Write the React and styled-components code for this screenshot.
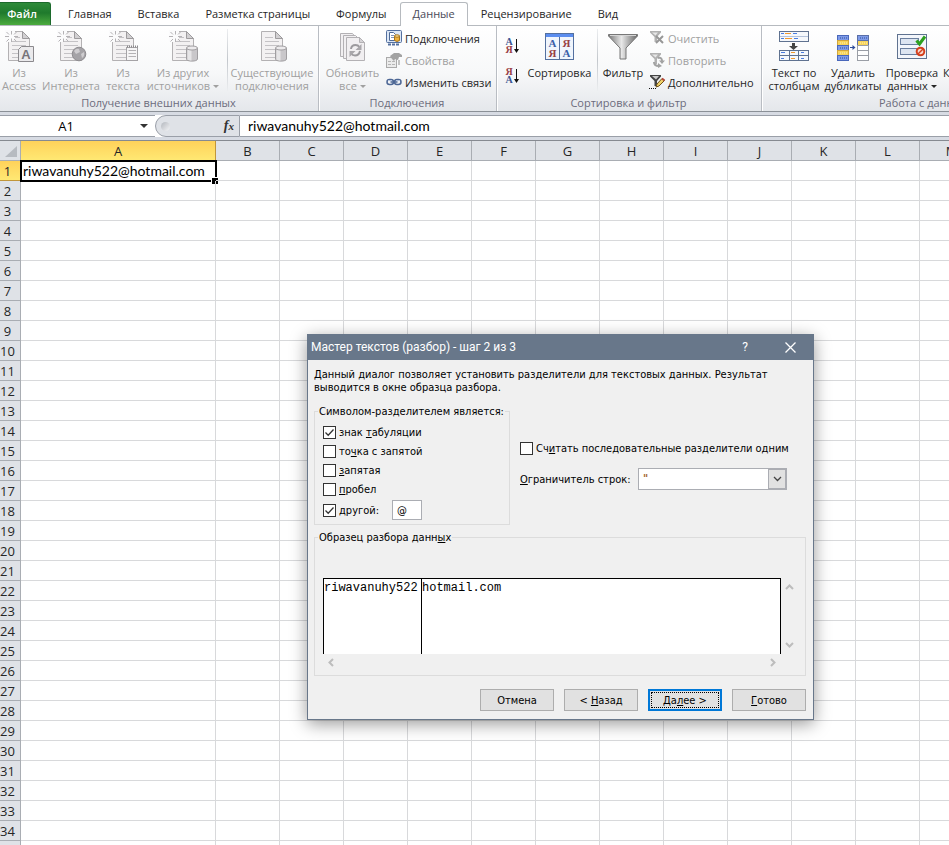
import React, { useState } from "react";
import styled, { createGlobalStyle, css } from "styled-components";

const GlobalStyle = createGlobalStyle`
  * {
    box-sizing: border-box;
  }
  html,
  body {
    margin: 0;
    background: #fff;
  }
  body {
    font-family: "Open Sans", "Noto Sans", sans-serif;
    font-size: 11px;
    color: #262626;
  }
  button,
  input,
  select {
    font: inherit;
    color: inherit;
  }
`;

const Page = styled.div`
  display: flex;
  flex-direction: column;
  height: 100vh;
  overflow: hidden;
`;

/* ---------- ribbon ---------- */

const Tabs = styled.nav`
  display: flex;
  align-items: flex-end;
  height: 26px;
  padding-top: 2px;
  border-bottom: 1px solid #b6babf;
`;

const Tab = styled.button`
  align-self: stretch;
  padding: 0 12px 2px;
  margin-bottom: -1px;
  border: 1px solid transparent;
  border-bottom: none;
  border-radius: 3px 3px 0 0;
  background: none;
  white-space: nowrap;
  ${({ $active }) =>
    $active &&
    css`
      border-color: #b6babf;
      background: #fff;
      color: #4a4a58;
    `}
`;

const FileTab = styled(Tab)`
  width: 51px;
  margin: 0 4px 0 0;
  padding: 0 6px 2px 0;
  border: 1px solid #1c6a2c;
  border-left: none;
  border-bottom: none;
  border-radius: 0 3px 0 0;
  background: linear-gradient(#2e8b3a, #1f7a2c 45%, #4cab3e);
  color: #fff;
  font-weight: 600;
`;

const RibbonBar = styled.div`
  display: flex;
  flex: none;
  overflow: hidden;
  background: linear-gradient(#fff, #f7f8f9 55%, #e4e7eb);
  border-bottom: 1px solid #8b9097;
`;

const Group = styled.section`
  display: flex;
  flex-direction: column;
  flex: 0 0 ${({ $width }) => $width}px;
  border-right: 1px solid #b9bdc3;
  box-shadow: 1px 0 #fff;
  padding-right: 1px;
`;

const GroupBody = styled.div`
  display: flex;
  height: 70px;
`;

const GroupTitle = styled.div`
  height: 15px;
  line-height: 14px;
  text-align: center;
  color: #6c6c7c;
`;

const BigButton = styled.button`
  display: flex;
  flex-direction: column;
  align-items: center;
  gap: 4px;
  flex: 0 0 ${({ $width }) => $width}px;
  min-width: 0;
  padding: 4px 0 0;
  border: none;
  background: none;
  line-height: 13px;
  white-space: nowrap;
  color: ${({ disabled }) => (disabled ? "#a0a0a0" : "#262626")};

  svg {
    flex: none;
  }
`;

const Label = styled.span`
  display: block;
  width: max-content;
`;

const Divider = styled.div`
  width: 1px;
  height: 62px;
  margin: 3px 3px 0;
  background: linear-gradient(#eceef0, #c3c7cc, #eceef0);
`;

const Stack = styled.div`
  display: flex;
  flex-direction: column;
  padding: 1px 0 0 ${({ $indent }) => $indent || 0}px;
`;

const SmallButton = styled.button`
  display: flex;
  align-items: center;
  gap: 3px;
  height: 22px;
  padding: 0;
  border: none;
  background: none;
  white-space: nowrap;
  color: ${({ disabled }) => (disabled ? "#a0a0a0" : "#262626")};
`;

const SortColumn = styled.div`
  display: flex;
  flex-direction: column;
  align-items: flex-end;
  gap: 14px;
  width: 28px;
  padding: 12px 4px 0 0;
`;

const IconButton = styled.button`
  display: flex;
  padding: 0;
  border: none;
  background: none;
`;

const Caret = styled.span`
  display: inline-block;
  margin-left: 3px;
  vertical-align: 2px;
  border: 3px solid transparent;
  border-top-color: currentColor;
  border-bottom: none;
`;

/* ---------- formula bar ---------- */

const FormulaBar = styled.div`
  display: flex;
  flex: none;
  height: 29px;
  padding: 3px 0;
  background: #d7dbe3;
  border-bottom: 1px solid #868a91;
`;

const NameBox = styled.div`
  display: flex;
  align-items: center;
  width: 155px;
  border: solid #9a9fa8;
  border-width: 1px 0;
  background: #fff;
`;

const NameInput = styled.input`
  width: 132px;
  padding: 0;
  border: none;
  outline: none;
  background: none;
  color: #000;
  font-size: 13px;
  text-align: center;
`;

const DropButton = styled.button`
  display: flex;
  justify-content: center;
  flex: 1;
  padding: 0;
  border: none;
  background: none;
`;

const DropArrow = styled.span`
  border: 4px solid transparent;
  border-top-color: #333;
  border-bottom: none;
`;

const FunctionArea = styled.div`
  width: 85px;
  background: #fff;
`;

const FunctionPill = styled.div`
  display: flex;
  align-items: center;
  justify-content: space-between;
  height: 100%;
  padding: 0 5px;
  border: 1px solid #9a9fa8;
  border-radius: 11px 0 0 11px;
  background: #dfe2e7;
`;

const Knob = styled.span`
  width: 9px;
  height: 9px;
  border-radius: 50%;
  background: linear-gradient(135deg, #b3b7bd, #f4f5f7);
`;

const FxButton = styled.button`
  padding: 0;
  border: none;
  background: none;
  font: italic bold 14px/16px "Liberation Serif", serif;
  color: #333;

  small {
    font-size: 11px;
  }
`;

const FormulaInput = styled.input`
  flex: 1;
  min-width: 0;
  padding: 0 8px 2px;
  border: solid #9a9fa8;
  border-width: 1px 0;
  outline: none;
  background: #fff;
  color: #000;
  font-family: Lato, sans-serif;
  font-size: 14px;
`;

/* ---------- sheet ---------- */

const SheetArea = styled.main`
  flex: 1;
  min-height: 0;
  overflow: hidden;
`;

const Sheet = styled.table`
  width: max-content;
  table-layout: fixed;
  border-collapse: separate;
  border-spacing: 0;
  font-size: 13px;
`;

const Col = styled.col`
  width: ${({ $width }) => $width}px;
`;

const headStyle = css`
  height: 20px;
  border: solid;
  border-width: 0 1px 1px 0;
  font-weight: 400;
  line-height: 17px;
  background: ${({ $active }) =>
    $active ? "linear-gradient(#ffd25a, #ffe873)" : "#dfe2e7"};
  border-color: ${({ $active }) => ($active ? "#c1963a" : "#a9adb3")};
`;

const ColHead = styled.th`
  padding: 2px 0 0;
  ${headStyle}
`;

const RowHead = styled.th`
  padding: 2px 5px 0 0;
  ${headStyle}
`;

const Corner = styled(ColHead)`
  svg {
    display: block;
    margin-left: 5px;
  }
`;

const Cell = styled.td`
  position: relative;
  padding: 0 0 0 2px;
  border: solid #d8d9db;
  border-width: 0 1px 1px 0;
  line-height: 19px;
  white-space: nowrap;
  color: #000;
  font-family: Lato, sans-serif;
  font-size: 14px;
  ${({ $selected }) =>
    $selected &&
    css`
      outline: 2px solid #000;
      outline-offset: -1px;

      &::after {
        content: "";
        position: absolute;
        right: -3px;
        bottom: -4px;
        width: 6px;
        height: 6px;
        border: solid #fff;
        border-width: 1px 0 0 1px;
        background: #000;
      }
    `}
`;

/* ---------- dialog ---------- */

const Dialog = styled.div`
  position: absolute;
  left: 307px;
  top: 334px;
  width: 507px;
  border: 1px solid #68778a;
  background: #f0f0f0;
  box-shadow: 0 4px 16px rgba(0, 0, 0, 0.4);
  color: #000;
  font-family: "DejaVu Sans Condensed", "DejaVu Sans", sans-serif;
  font-size: 11px;
  line-height: 13px;
`;

const TitleBar = styled.header`
  display: flex;
  align-items: center;
  height: 25px;
  padding: 0 8px 0 3px;
  background: #68778a;
  color: #fff;
  font-family: Roboto, "Open Sans", sans-serif;
  font-size: 12px;
`;

const DialogTitle = styled.h1`
  flex: 1;
  margin: 0;
  font-size: 12px;
  font-weight: 400;
`;

const TitleButton = styled.button`
  display: flex;
  align-items: center;
  justify-content: center;
  width: 30px;
  margin-left: 15px;
  padding: 0;
  border: none;
  background: none;
`;

const DialogBody = styled.div`
  padding: 8px 7px 8px 6px;
`;

const Description = styled.p`
  margin: 0 0 11px;
`;

const Columns = styled.div`
  display: flex;
  gap: 10px;
`;

const Frame = styled.fieldset`
  min-width: 0;
  margin: 0;
  padding: 0;
  border: 1px solid #dcdcdc;
`;

const Delimiters = styled(Frame)`
  width: 196px;
  height: 120px;
  padding: 5px 8px 0;
`;

const Legend = styled.legend`
  margin-left: -5px;
  padding: 0 1px;
  white-space: nowrap;
`;

const CheckRow = styled.label`
  display: flex;
  align-items: center;
  gap: 3px;
  height: 19px;
  white-space: nowrap;
`;

const OtherRow = styled.div`
  display: flex;
  align-items: center;
  gap: 13px;
  height: 22px;
`;

const Check = styled.input`
  appearance: none;
  flex: none;
  width: 13px;
  height: 13px;
  margin: 0;
  border: 1px solid #333;
  background: #fff;

  &:checked {
    background: #fff
      url("data:image/svg+xml,%3Csvg xmlns='http://www.w3.org/2000/svg' width='11' height='11'%3E%3Cpath d='M1.5 5.5L4.2 8.2L9.5 2.5' fill='none' stroke='%23333' stroke-width='1.3'/%3E%3C/svg%3E");
  }
`;

const OtherInput = styled.input`
  width: 30px;
  height: 20px;
  padding: 0 4px;
  border: 1px solid #abadb3;
  outline: none;
  background: #fff;
`;

const Options = styled.div`
  display: flex;
  flex-direction: column;
  gap: 10px;
  flex: 1;
  padding-top: 34px;
`;

const QualifierRow = styled.div`
  display: flex;
  align-items: center;
  justify-content: space-between;
  padding-right: 19px;
  white-space: nowrap;
`;

const SelectBox = styled.div`
  display: grid;
  grid-template-columns: 1fr 18px;
  width: 149px;
  height: 22px;
  border: 1px solid #abadb3;
  background: #fff;
`;

const Select = styled.select`
  grid-area: 1 / 1 / 2 / 3;
  appearance: none;
  padding: 0 4px 2px;
  border: none;
  outline: none;
  background: none;
  color: #a3622a;
  font-weight: 700;
`;

const SelectArrow = styled.span`
  grid-area: 1 / 2;
  display: flex;
  align-items: center;
  justify-content: center;
  border: 1px solid #abadb3;
  background: #e1e1e1;
  pointer-events: none;
`;

const PreviewFrame = styled(Frame)`
  margin-top: 6px;
  height: 145px;
  padding: 34px 8px 0;
`;

const PreviewGrid = styled.div`
  display: grid;
  grid-template-columns: 1fr 16px;
`;

const Preview = styled.table`
  height: 76px;
  border-spacing: 0;
  border-top: 1px solid #000;
  border-right: 1px solid #000;
  background: #fff;
  font-family: "Liberation Mono", monospace;
  font-size: 12px;

  td {
    padding: 3px 0 0;
    border-left: 1px solid #000;
    vertical-align: top;
  }

  td:first-child {
    width: 98px;
  }
`;

const ScrollTrack = styled.div`
  display: flex;
  flex-direction: ${({ $vertical }) => ($vertical ? "column" : "row")};
  justify-content: space-between;
  align-items: center;
  padding: ${({ $vertical }) => ($vertical ? "4px 0" : "4px 3px")};
`;

const Footer = styled.footer`
  display: flex;
  justify-content: flex-end;
  gap: 10px;
  margin-top: 13px;
`;

const DialogButton = styled.button`
  width: 74px;
  height: 22px;
  padding: 0;
  border: ${({ $primary }) =>
    $primary ? "2px solid #0078d7" : "1px solid #adadad"};
  background: #e1e1e1;
  ${({ $primary }) =>
    $primary &&
    css`
      outline: 1px dotted #000;
      outline-offset: -4px;
    `}
`;

/* ---------- icons ---------- */

const Icon = ({ size = 32, children }) => (
  <svg width={size} height={size} viewBox={`0 0 ${size} ${size}`} overflow="visible" aria-hidden="true">
    {children}
  </svg>
);

const Doc = ({ sparkle }) => (
  <>
    <path d="M5.5 1.5H19.5L26.5 8.5V30.5H5.5Z" fill="#f3f1f2" stroke="#b3b1b3" />
    <path d="M19.5 1.5V8.5H26.5Z" fill="#d2d0d2" stroke="#9d9b9d" />
    <path
      d="M9 7.5H17M9 11.5H23M9 15.5H23M9 19.5H23M9 23.5H23M9 27.5H20"
      stroke="#c4c2c5"
    />
    {sparkle && (
      <>
        <path d="M2 0H12V8L8 12H2Z" fill="#fbfbfc" />
        <path
          d="M8.5 1V4.5M8.5 8.5V12M2 6.5H6M11 6.5H15M3.500 2L6 4.5M13.500 2L11 4.5M3.500 11.5L6 9M13.500 11.5L11 9"
          stroke="#b4b2b5"
          fill="none"
        />
      </>
    )}
  </>
);

const Cylinder = () => (
  <>
    <path d="M19.5 18V29C19.5 31.8 30.5 31.8 30.5 29V18Z" fill="#c9c7ca" stroke="#a09ea1" />
    <path d="M21.5 20V30M23.5 20V30.5" stroke="#e6e5e7" strokeWidth="2" />
    <ellipse cx="25" cy="18" rx="5.5" ry="2" fill="#eceaec" stroke="#a09ea1" />
  </>
);

const AccessIcon = () => (
  <Icon>
    <Doc sparkle />
    <path d="M18.5 16.5H30.5V31.5H15.5V19.5Z" fill="#ebeaec" stroke="#8b898d" />
    <text x="23" y="29" fontFamily="Liberation Sans" fontSize="13" fontWeight="700" textAnchor="middle" fill="#77757a">
      A
    </text>
  </Icon>
);

const WebIcon = () => (
  <Icon>
    <Doc sparkle />
    <circle cx="24" cy="24" r="6.8" fill="#a5a3a7" stroke="#8e8c90" />
    <path d="M19 21Q21 18 24 19L25 22L21 24ZM26 24L29 22Q30 26 27 28Z" fill="#cfcdd0" />
  </Icon>
);

const TextIcon = () => (
  <Icon>
    <Doc sparkle />
    <rect x="19.5" y="17.5" width="11" height="13" fill="#f6f5f6" stroke="#a5a3a6" />
    <path d="M20 16.5H31" stroke="#8b898c" strokeWidth="2" strokeDasharray="1 1" />
    <path d="M21.5 20.5H29M21.5 23.5H29M21.5 26.5H29" stroke="#b4b2b5" />
  </Icon>
);

const SourcesIcon = () => (
  <Icon>
    <Doc sparkle />
    <Cylinder />
  </Icon>
);

const ExistingIcon = () => (
  <Icon>
    <Doc />
    <Cylinder />
  </Icon>
);

const RefreshIcon = () => (
  <Icon>
    <g fill="#f1eff1" stroke="#b3b1b4">
      <path d="M3.5 3.5H15.5L19.5 8.5V26.5H3.5Z" />
      <path d="M6.5 5.5H18.5L23.5 10.5V28.5H6.5Z" />
      <path d="M9.5 7.5H22.5L27.5 12.5V30.5H9.5Z" />
      <path d="M22.5 7.5V12.5H27.5Z" fill="#d6d4d7" />
    </g>
    <path d="M14 19Q14.5 15 18.5 15Q21 15 22.5 17M23 21Q22 25.5 18 25.5Q15.5 25.5 14 23.5" fill="none" stroke="#9c9a9e" strokeWidth="2" />
    <path d="M24.5 14V20H18.5ZM12.5 27V21H18.5Z" fill="#a9a7ab" />
  </Icon>
);

const ConnectionsIcon = () => (
  <Icon size={16}>
    <rect x="0.5" y="0.5" width="15" height="12" rx="1" fill="#dbe6f5" stroke="#54709f" />
    <path d="M3.5 2.5H7.5L9.5 4.5V10.5H3.5Z" fill="#fff" stroke="#4f6a96" />
    <path d="M5 5.5H8M5 7.5H8" stroke="#7d93b8" />
    <path d="M8.5 6V10.5Q11 12.5 13.5 10.5V6Z" fill="#eeb23c" stroke="#a6741c" />
    <ellipse cx="11" cy="6" rx="2.5" ry="1.2" fill="#ffe39a" stroke="#a6741c" />
    <path d="M2 14.5H14" stroke="#54709f" strokeWidth="2" strokeDasharray="3 1" />
  </Icon>
);

const PropertiesIcon = () => (
  <Icon size={16}>
    <rect x="0.5" y="5.5" width="10" height="10" fill="#ebebeb" stroke="#aaa" />
    <path d="M2 9.5H5M2 12.5H5M6 9.5H9M6 12.5H9" stroke="#b5b5b5" />
    <path d="M4 4L8 1H13L16 3V5H13L12 8L9 7L8 9L6 7Z" fill="#a3a3a3" />
    <path d="M12 8H14V13H12Z" fill="#c4c4c4" />
  </Icon>
);

const LinksIcon = () => (
  <Icon size={16}>
    <g fill="none" stroke="#4d6795" strokeWidth="1.5">
      <rect x="1" y="5.5" width="6.5" height="5" rx="2.5" />
      <rect x="8.5" y="5.5" width="6.5" height="5" rx="2.5" />
      <path d="M4.5 8H11.5" />
    </g>
    <path d="M2 6.5H6M10 6.5H14" stroke="#b5c5e0" />
  </Icon>
);

const SortIcon = ({ top, bottom }) => {
  const color = (letter) => (letter === "А" ? "#3b5492" : "#994045");
  return (
    <Icon size={16}>
      <g fontFamily="Liberation Serif" fontSize="10" fontWeight="700" textAnchor="middle">
        <text x="4" y="7" fill={color(top)}>{top}</text>
        <text x="4" y="15" fill={color(bottom)}>{bottom}</text>
      </g>
      <path d="M11.5 1V14" stroke="#111" />
      <path d="M9 11H14L11.5 15Z" fill="#111" />
    </Icon>
  );
};

const SortDialogIcon = () => (
  <Icon>
    <rect x="1.5" y="3.5" width="28" height="26" fill="#f0f5fc" stroke="#54709f" />
    <path d="M2 4H29V7H2Z" fill="#5b8def" />
    <path d="M15.5 7V29" stroke="#54709f" />
    <g fontFamily="Liberation Serif" fontSize="11" fontWeight="700" textAnchor="middle">
      <text x="8.5" y="17" fill="#3b5fa8">А</text>
      <text x="8.5" y="27" fill="#994045">Я</text>
      <text x="22.5" y="17" fill="#994045">Я</text>
      <text x="22.5" y="27" fill="#3b5fa8">А</text>
    </g>
  </Icon>
);

const FilterIcon = () => (
  <Icon>
    <defs>
      <linearGradient id="funnel">
        <stop offset="0" stopColor="#777" />
        <stop offset="0.45" stopColor="#e8e8e8" />
        <stop offset="1" stopColor="#666" />
      </linearGradient>
    </defs>
    <path d="M1.5 4.5H30.5V6L19 18V29H13V18L1.5 6Z" fill="url(#funnel)" stroke="#777" />
    <path d="M3 5.5H29" stroke="#d5d5d5" />
  </Icon>
);

const MiniFunnel = ({ fill }) => <path d="M1 1H12V2.5L8 7V12H5.5V7L1 2.5Z" fill={fill} />;

const ClearIcon = () => (
  <Icon size={16}>
    <MiniFunnel fill="#b1b1b1" />
    <path d="M3 2.5H9L6.5 5.5Z" fill="#e6e6e6" />
    <path d="M7 6L14 13M14 6L7 13" stroke="#979797" strokeWidth="2" />
  </Icon>
);

const ReapplyIcon = () => (
  <Icon size={16}>
    <MiniFunnel fill="#b1b1b1" />
    <path d="M3 2.5H9L6.5 5.5Z" fill="#e6e6e6" />
    <path d="M9 6Q13 5 13 9M5 10Q5 14 10 14" fill="none" stroke="#a2a2a2" strokeWidth="2" />
    <path d="M10 8.5H16L13 12ZM9 11L13 14L9 16Z" fill="#a2a2a2" />
  </Icon>
);

const AdvancedIcon = () => (
  <Icon size={16}>
    <MiniFunnel fill="#444" />
    <path d="M3 2H10L7 5.5Z" fill="#c9c9c9" />
    <path d="M7 13L8 10L13 4.5L15.5 6.5L10 12Z" fill="#f0d268" stroke="#6d5018" />
    <path d="M13 4.5L15.5 6.5" stroke="#b5463b" strokeWidth="2" />
    <path d="M0 14.5H7" stroke="#111" strokeDasharray="1 1" />
  </Icon>
);

const ColumnsIcon = () => (
  <Icon>
    <g fill="#f5f8fc" stroke="#5f7290">
      <rect x="1.5" y="1.5" width="29" height="10" />
      <rect x="1.5" y="20.5" width="29" height="10" />
      <path d="M1.5 25.5H30.5M11.5 20.5V30.5M20.5 20.5V30.5" />
    </g>
    <path d="M2 6.5H30" stroke="#b4c3dc" />
    <path d="M3 3.5H6M15 3.5H19M3 8.5H6M16 8.5H20M3 22.5H7M23 22.5H26M3 28.5H6M23 28.5H26" stroke="#4a7de0" />
    <path d="M7 3.5H13M7 8.5H14M13 22.5H17M13 28.5H17" stroke="#f29a2e" />
    <path d="M14 13H17V16H20L15.5 20L11 16H14Z" fill="#444" />
  </Icon>
);

const DuplicatesIcon = () => (
  <Icon>
    {["#7e9be8", "#f8d45a", "#7e9be8", "#f8d45a", "#7e9be8"].map((fill, i) => (
      <g key={i}>
        <rect x="0.5" y={5.5 + i * 5} width="11" height="5" fill={fill} stroke={i % 2 ? "#d3a63a" : "#4a68bb"} />
        <path d={`M3 ${8 + i * 5}H10`} stroke={i % 2 ? "#fdf0bb" : "#2f4c9a"} strokeDasharray="1 1" />
      </g>
    ))}
    {["#7e9be8", "#f8d45a", "#fff", "#fff", "#fff"].map((fill, i) => (
      <rect key={i} x="20.5" y={5.5 + i * 5} width="11" height="5" fill={fill} stroke={i > 1 ? "#9a9ea6" : "#5a6fa8"} />
    ))}
    <path d="M23 8H30" stroke="#2f4c9a" strokeDasharray="1 1" />
    <path d="M23 13H30" stroke="#fdf0bb" strokeDasharray="1 1" />
    <path d="M13 17.5H17" stroke="#2f4c9a" />
    <path d="M15.5 15L18.5 17.5L15.5 20Z" fill="#2f4c9a" />
  </Icon>
);

const ValidationIcon = () => (
  <Icon>
    <rect x="1.5" y="4.5" width="29" height="24" fill="#f3f6fb" stroke="#5f7290" />
    <rect x="4.5" y="8.5" width="18" height="6" fill="#dde5f1" stroke="#6b7f9f" />
    <rect x="4.5" y="18.5" width="18" height="6" fill="#dde5f1" stroke="#6b7f9f" />
    <path d="M20.5 10.5L23.5 14L29 6.5" fill="none" stroke="#2ea01f" strokeWidth="3" />
    <circle cx="24.5" cy="21.5" r="3.8" fill="#f7d9d0" stroke="#d43f1c" strokeWidth="2" />
    <path d="M22 24L27 19" stroke="#d43f1c" strokeWidth="1.5" />
  </Icon>
);

const ConsolidateIcon = () => (
  <Icon>
    <rect x="1.5" y="4.5" width="12" height="10" fill="#f3f6fb" stroke="#5f7290" />
    <rect x="17.5" y="16.5" width="13" height="12" fill="#f3f6fb" stroke="#5f7290" />
  </Icon>
);

const Chevron = ({ direction, color = "#bdbdbd", width = 2 }) => {
  const paths = {
    up: "M1 7L4.5 3.5L8 7",
    down: "M1 2L4.5 5.5L8 2",
    left: "M7 1L3.5 4.5L7 8",
    right: "M2 1L5.5 4.5L2 8",
  };
  return (
    <Icon size={9}>
      <path d={paths[direction]} fill="none" stroke={color} strokeWidth={width} />
    </Icon>
  );
};

/* ---------- parts ---------- */

const Ribbon = () => (
  <RibbonBar>
    <Group $width={319}>
      <GroupBody>
        <BigButton $width={38} disabled>
          <AccessIcon />
          <Label>Из<br />Access</Label>
        </BigButton>
        <BigButton $width={66} disabled>
          <WebIcon />
          <Label>Из<br />Интернета</Label>
        </BigButton>
        <BigButton $width={38} disabled>
          <TextIcon />
          <Label>Из<br />текста</Label>
        </BigButton>
        <BigButton $width={82} disabled>
          <SourcesIcon />
          <Label>Из других<br />источников<Caret /></Label>
        </BigButton>
        <Divider />
        <BigButton $width={82} disabled>
          <ExistingIcon />
          <Label>Существующие<br />подключения</Label>
        </BigButton>
      </GroupBody>
      <GroupTitle>Получение внешних данных</GroupTitle>
    </Group>
    <Group $width={178}>
      <GroupBody>
        <BigButton $width={67} disabled>
          <RefreshIcon />
          <Label>Обновить<br />все<Caret /></Label>
        </BigButton>
        <Stack>
          <SmallButton><ConnectionsIcon />Подключения</SmallButton>
          <SmallButton disabled><PropertiesIcon />Свойства</SmallButton>
          <SmallButton><LinksIcon />Изменить связи</SmallButton>
        </Stack>
      </GroupBody>
      <GroupTitle>Подключения</GroupTitle>
    </Group>
    <Group $width={265}>
      <GroupBody>
        <SortColumn>
          <IconButton aria-label="Сортировка от А до Я"><SortIcon top="А" bottom="Я" /></IconButton>
          <IconButton aria-label="Сортировка от Я до А"><SortIcon top="Я" bottom="А" /></IconButton>
        </SortColumn>
        <BigButton $width={69}>
          <SortDialogIcon />
          <Label>Сортировка</Label>
        </BigButton>
        <Divider />
        <BigButton $width={44}>
          <FilterIcon />
          <Label>Фильтр</Label>
        </BigButton>
        <Stack $indent={4}>
          <SmallButton disabled><ClearIcon />Очистить</SmallButton>
          <SmallButton disabled><ReapplyIcon />Повторить</SmallButton>
          <SmallButton><AdvancedIcon />Дополнительно</SmallButton>
        </Stack>
      </GroupBody>
      <GroupTitle>Сортировка и фильтр</GroupTitle>
    </Group>
    <Group $width={334}>
      <GroupBody>
        <BigButton $width={64}>
          <ColumnsIcon />
          <Label>Текст по<br />столбцам</Label>
        </BigButton>
        <BigButton $width={54}>
          <DuplicatesIcon />
          <Label>Удалить<br />дубликаты</Label>
        </BigButton>
        <BigButton $width={64}>
          <ValidationIcon />
          <Label>Проверка<br />данных<Caret /></Label>
        </BigButton>
        <BigButton $width={76}>
          <ConsolidateIcon />
          <Label>Консолидация</Label>
        </BigButton>
      </GroupBody>
      <GroupTitle>Работа с данными</GroupTitle>
    </Group>
  </RibbonBar>
);

const letters = ["A", "B", "C", "D", "E", "F", "G", "H", "I", "J", "K", "L", "M", "N", "O", "P"];
const rows = Array.from({ length: 40 }, (_, i) => i + 1);

const Spreadsheet = ({ value }) => (
  <SheetArea>
    <Sheet>
      <colgroup>
        <Col $width={21} />
        {letters.map((l) => <Col key={l} $width={l === "A" ? 195 : 64} />)}
      </colgroup>
      <thead>
        <tr>
          <Corner>
            <svg width="12" height="12" aria-hidden="true"><path d="M12 0V11H0Z" fill="#b7bbc1" /></svg>
          </Corner>
          {letters.map((l) => <ColHead key={l} $active={l === "A"}>{l}</ColHead>)}
        </tr>
      </thead>
      <tbody>
        {rows.map((n) => (
          <tr key={n}>
            <RowHead $active={n === 1}>{n}</RowHead>
            {letters.map((l) => {
              const selected = n === 1 && l === "A";
              return <Cell key={l} $selected={selected}>{selected ? value : null}</Cell>;
            })}
          </tr>
        ))}
      </tbody>
    </Sheet>
  </SheetArea>
);

const TextWizard = () => (
  <Dialog role="dialog" aria-labelledby="wizard-title">
    <TitleBar>
      <DialogTitle id="wizard-title">Мастер текстов (разбор) - шаг 2 из 3</DialogTitle>
      <TitleButton>?</TitleButton>
      <TitleButton aria-label="Закрыть">
        <svg width="11" height="11" aria-hidden="true">
          <path d="M0.5 0.5L10.5 10.5M10.5 0.5L0.5 10.5" stroke="#fff" strokeWidth="1.3" />
        </svg>
      </TitleButton>
    </TitleBar>
    <DialogBody>
      <Description>
        Данный диалог позволяет установить разделители для текстовых данных. Результат
        <br />
        выводится в окне образца разбора.
      </Description>
      <Columns>
        <Delimiters>
          <Legend>Символом-разделителем является:</Legend>
          <CheckRow><Check type="checkbox" defaultChecked /><span>знак <u>т</u>абуляции</span></CheckRow>
          <CheckRow><Check type="checkbox" /><span>то<u>ч</u>ка с запятой</span></CheckRow>
          <CheckRow><Check type="checkbox" /><span><u>з</u>апятая</span></CheckRow>
          <CheckRow><Check type="checkbox" /><span><u>п</u>робел</span></CheckRow>
          <OtherRow>
            <CheckRow><Check type="checkbox" defaultChecked /><span><u>д</u>ругой:</span></CheckRow>
            <OtherInput aria-label="другой" defaultValue="@" />
          </OtherRow>
        </Delimiters>
        <Options>
          <CheckRow><Check type="checkbox" /><span>Сч<u>и</u>тать последовательные разделители одним</span></CheckRow>
          <QualifierRow>
            <label htmlFor="qualifier"><u>О</u>граничитель строк:</label>
            <SelectBox>
              <Select id="qualifier" defaultValue={'"'}>
                <option>{'"'}</option>
              </Select>
              <SelectArrow><Chevron direction="down" color="#444" width={1.3} /></SelectArrow>
            </SelectBox>
          </QualifierRow>
        </Options>
      </Columns>
      <PreviewFrame>
        <Legend>Образец разбора данн<u>ы</u>х</Legend>
        <PreviewGrid>
          <Preview>
            <tbody>
              <tr><td>riwavanuhy522</td><td>hotmail.com</td></tr>
            </tbody>
          </Preview>
          <ScrollTrack $vertical><Chevron direction="up" /><Chevron direction="down" /></ScrollTrack>
          <ScrollTrack><Chevron direction="left" /><Chevron direction="right" /></ScrollTrack>
        </PreviewGrid>
      </PreviewFrame>
      <Footer>
        <DialogButton>Отмена</DialogButton>
        <DialogButton>&lt; <u>Н</u>азад</DialogButton>
        <DialogButton $primary>Да<u>л</u>ее &gt;</DialogButton>
        <DialogButton><u>Г</u>отово</DialogButton>
      </Footer>
    </DialogBody>
  </Dialog>
);

const App = () => {
  const [value, setValue] = useState("riwavanuhy522@hotmail.com");

  return (
    <Page>
      <GlobalStyle />
      <Tabs>
        <FileTab>Файл</FileTab>
        <Tab>Главная</Tab>
        <Tab>Вставка</Tab>
        <Tab>Разметка страницы</Tab>
        <Tab>Формулы</Tab>
        <Tab $active>Данные</Tab>
        <Tab>Рецензирование</Tab>
        <Tab>Вид</Tab>
      </Tabs>
      <Ribbon />
      <FormulaBar>
        <NameBox>
          <NameInput aria-label="Имя" defaultValue="A1" />
          <DropButton aria-label="Список имён"><DropArrow /></DropButton>
        </NameBox>
        <FunctionArea>
          <FunctionPill>
            <Knob />
            <FxButton aria-label="Вставить функцию">f<small>x</small></FxButton>
          </FunctionPill>
        </FunctionArea>
        <FormulaInput aria-label="Строка формул" value={value} onChange={(e) => setValue(e.target.value)} />
      </FormulaBar>
      <Spreadsheet value={value} />
      <TextWizard />
    </Page>
  );
};

export default App;
